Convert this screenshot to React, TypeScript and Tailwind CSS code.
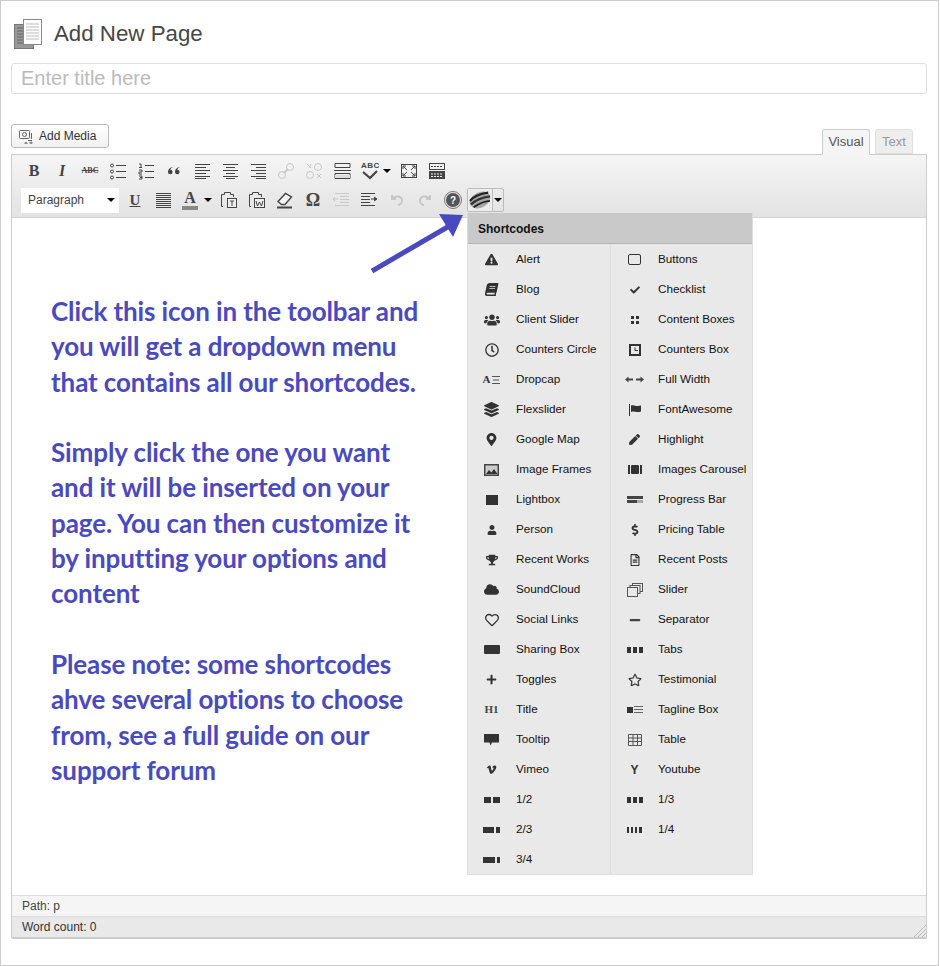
import type { ReactNode } from "react";
import {
  FaBook,
  FaCheck,
  FaCloud,
  FaDollarSign,
  FaExclamationTriangle,
  FaLayerGroup,
  FaMapMarkerAlt,
  FaMinus,
  FaPen,
  FaPlus,
  FaRegClock,
  FaRegFileAlt,
  FaRegHeart,
  FaRegStar,
  FaTrophy,
  FaUser,
  FaUsers,
  FaVimeoV,
} from "react-icons/fa";

const sans = "font-['Liberation_Sans',Arial,sans-serif]";

function Glyph({ children, muted }: { children: ReactNode; muted?: boolean }) {
  return (
    <svg
      viewBox="0 0 20 20"
      className={`w-5 h-5 ${muted ? "text-[#c8c8c8]" : "text-[#444]"}`}
      fill="none"
      stroke="currentColor"
      strokeWidth="1"
    >
      {children}
    </svg>
  );
}

function Lines({ rows }: { rows: [number, number, number][] }) {
  return (
    <>
      {rows.map(([y, a, b], i) => (
        <path key={i} d={`M${a} ${y}.5H${b}`} />
      ))}
    </>
  );
}

function Tool({ children, className = "w-7" }: { children: ReactNode; className?: string }) {
  return <div className={`h-7 flex items-center justify-center shrink-0 ${className}`}>{children}</div>;
}

function Caret() {
  return <div className="w-0 h-0 border-x-[4px] border-x-transparent border-t-[4px] border-t-black" />;
}

function PageIcon() {
  return (
    <svg viewBox="0 0 28 31" className="w-[28px] h-[31px]">
      <rect x="0.5" y="5.5" width="19" height="24" fill="#999" stroke="#777" />
      <path d="M3 9h6M3 12h6M3 15h6M3 18h6M3 21h6M3 24h6" stroke="#666" />
      <rect x="9.5" y="0.5" width="18" height="25" fill="#fff" stroke="#888" />
      <path d="M12 5h13M12 8h13M12 11h13M12 14h13M12 17h13M12 20h13" stroke="#bbb" />
    </svg>
  );
}

function MediaIcon() {
  return (
    <svg viewBox="0 0 16 16" className="w-4 h-4" fill="none" stroke="#666">
      <rect x="1.5" y="2.500" width="10" height="8" rx="1" />
      <circle cx="6.500" cy="6.500" r="2" />
      <path d="M13.500 5v6M10 12.500h4M8 14.500a1 1 0 1 0 .1 0M13 14a1 1 0 1 0 .1 0" />
    </svg>
  );
}

function ShortcodeLogo() {
  return (
    <svg viewBox="0 0 26 22" className="w-[24px] h-[20px]">
      <ellipse cx="13" cy="11" rx="12" ry="8.500" transform="rotate(-28 13 11)" fill="#a8a8a8" />
      <path d="M2 12C7 6 14 4 22 3" stroke="#222" strokeWidth="2.500" fill="none" />
      <path d="M3 16C9 10 16 8 24 7" stroke="#333" strokeWidth="2.500" fill="none" />
      <path d="M6 19C12 15 18 12 24 12" stroke="#222" strokeWidth="2" fill="none" />
    </svg>
  );
}

function Toolbar() {
  return (
    <div className="h-[63px] bg-gradient-to-b from-[#f5f5f5] to-[#e3e3e3] border-b border-[#d5d5d5] pt-[2px]">
      <div className="flex items-center h-7 pl-[8px]">
        <Tool><span className="font-['Liberation_Serif',serif] font-bold text-[16px] text-[#444]">B</span></Tool>
        <Tool><span className="font-['Liberation_Serif',serif] italic font-bold text-[16px] text-[#444]">I</span></Tool>
        <Tool><span className="font-['Liberation_Serif',serif] text-[8px] font-bold line-through text-[#444]">ABC</span></Tool>
        <Tool>
          <Glyph>
            <Lines rows={[[4, 8, 18], [10, 8, 18], [16, 8, 18]]} />
            <circle cx="4" cy="4.500" r="1.500" />
            <circle cx="4" cy="10.500" r="1.500" />
            <circle cx="4" cy="16.500" r="1.500" />
          </Glyph>
        </Tool>
        <Tool>
          <Glyph>
            <Lines rows={[[4, 9, 18], [10, 9, 18], [16, 9, 18]]} />
            <path d="M3 3h2v3M3 6.500h3M3 9h3v2H3v2h3M3 15h3v1.500H4h2V18H3" />
          </Glyph>
        </Tool>
        <Tool>
          <Glyph>
            <path
              d="M8.500 6C5.500 6.500 4 8.500 4 11a2.300 2.300 0 1 0 2.300-2.300c.2-1 1-1.700 2.200-2.100zM15.500 6c-3 .5-4.500 2.500-4.500 5a2.300 2.300 0 1 0 2.300-2.300c.2-1 1-1.700 2.200-2.100z"
              fill="#444"
              stroke="none"
            />
          </Glyph>
        </Tool>
        <Tool>
          <Glyph><Lines rows={[[3, 3, 18], [6, 3, 14], [9, 3, 18], [12, 3, 14], [15, 3, 18], [17, 3, 14]]} /></Glyph>
        </Tool>
        <Tool>
          <Glyph><Lines rows={[[3, 3, 18], [6, 6, 15], [9, 3, 18], [12, 6, 15], [15, 3, 18], [17, 6, 15]]} /></Glyph>
        </Tool>
        <Tool>
          <Glyph><Lines rows={[[3, 3, 18], [6, 8, 18], [9, 3, 18], [12, 8, 18], [15, 3, 18], [17, 8, 18]]} /></Glyph>
        </Tool>
        <Tool>
          <Glyph muted>
            <circle cx="6" cy="14" r="3.500" />
            <circle cx="14" cy="6" r="3.500" />
            <path d="M8 12l4-4" strokeWidth="2" />
          </Glyph>
        </Tool>
        <Tool>
          <Glyph muted>
            <circle cx="6" cy="14" r="3.500" />
            <circle cx="14" cy="6" r="3.500" />
            <path d="M3 3l4 4M5 7l2-4M13 13l4 4M17 13l-4 4" />
          </Glyph>
        </Tool>
        <Tool>
          <Glyph>
            <path d="M3 2.500h15v4H3zM2 9.500h17M3 12.500h15v5H3z" />
            <path d="M3 14h15v3H3z" fill="#ddd" stroke="none" />
          </Glyph>
        </Tool>
        <Tool className="w-[28px]">
          <div className="relative w-5 h-5">
            <span className={`absolute -top-[1px] left-[1px] text-[8px] font-bold tracking-[0.5px] text-[#444] ${sans}`}>ABC</span>
            <svg viewBox="0 0 20 20" className="absolute inset-0 w-5 h-5" fill="none" stroke="#444" strokeWidth="2.200">
              <path d="M3 11l7 6 7-7" />
            </svg>
          </div>
        </Tool>
        <div className="w-[10px] flex justify-start -ml-[1px]"><Caret /></div>
        <Tool className="w-[28px] ml-[2px]">
          <Glyph>
            <rect x="2.500" y="3.500" width="15" height="13" />
            <path d="M4 5l4 4M4 5h3M4 5v3M16 5l-4 4M16 5h-3M16 5v3M4 15l4-4M4 15h3M4 15v-3M16 15l-4-4M16 15h-3M16 15v-3" />
          </Glyph>
        </Tool>
        <Tool>
          <Glyph>
            <rect x="2.500" y="2.500" width="15" height="6" />
            <rect x="2.500" y="10.500" width="15" height="7" fill="#444" />
            <path d="M4 5.500h12" strokeDasharray="2 1" />
            <path d="M4 13h12M4 15.500h12" stroke="#eee" strokeDasharray="2 1" />
          </Glyph>
        </Tool>
      </div>
      <div className="flex items-center h-7 mt-[1px] pl-[9px]">
        <div className={`w-[98px] h-[25px] bg-white flex items-center justify-between pl-[7px] pr-[4px] text-[12px] text-[#444] shrink-0 ${sans}`}>
          <span>Paragraph</span>
          <Caret />
        </div>
        <Tool className="w-[32px]"><span className="font-['Liberation_Serif',serif] font-bold text-[15px] underline text-[#444]">U</span></Tool>
        <Tool className="w-[24px]">
          <Glyph><Lines rows={[[3, 3, 18], [5, 3, 18], [7, 3, 18], [9, 3, 18], [11, 3, 18], [13, 3, 18], [15, 3, 18], [17, 3, 18]]} /></Glyph>
        </Tool>
        <Tool className="w-[28px] ml-[1px]">
          <div className="flex flex-col items-center">
            <span className="font-['Liberation_Serif',serif] font-bold text-[16px] leading-[14px] text-[#444]">A</span>
            <div className="w-4 h-[4px] bg-[#888] mt-[1px]" />
          </div>
        </Tool>
        <div className="w-[10px] flex"><Caret /></div>
        <Tool className="w-[28px] ml-[1px]">
          <Glyph>
            <path d="M4 16.500H2.500v-12h3v-2h6v2h3V7" />
            <rect x="8.500" y="8.500" width="9" height="9" fill="#eee" />
            <path d="M11 11h4M13 11v5" />
          </Glyph>
        </Tool>
        <Tool>
          <Glyph>
            <path d="M4 16.500H2.500v-12h3v-2h6v2h3V7" />
            <rect x="7.500" y="8.500" width="10" height="9" fill="#eee" />
            <path d="M9 11l1.500 5 2-4 2 4 1.500-5" />
          </Glyph>
        </Tool>
        <Tool>
          <Glyph>
            <path d="M3 11.500l7.500-8 6 3.500-6.500 7.500H6.500z" fill="#f4f4f4" strokeWidth="1.400" />
            <path d="M2 17.500h15" strokeWidth="2" />
          </Glyph>
        </Tool>
        <Tool><span className="font-['Liberation_Serif',serif] font-bold text-[18px] text-[#444]">Ω</span></Tool>
        <Tool>
          <Glyph muted>
            <Lines rows={[[3, 4, 18], [6, 9, 18], [9, 9, 18], [12, 9, 18], [15, 4, 18]]} />
            <path d="M7 9H2M4 7L2 9l2 2" />
          </Glyph>
        </Tool>
        <Tool>
          <Glyph>
            <Lines rows={[[3, 2, 16], [6, 2, 11], [9, 2, 11], [12, 2, 11], [15, 2, 16]]} />
            <path d="M12 9h5M15 7l3 2-3 2" fill="#444" />
          </Glyph>
        </Tool>
        <Tool>
          <Glyph muted>
            <path d="M5 5v4h4M5 9c2-3 9-4 10 1 .5 3-2 5-4 5" strokeWidth="2" />
          </Glyph>
        </Tool>
        <Tool>
          <Glyph muted>
            <path d="M15 5v4h-4M15 9c-2-3-9-4-10 1-.5 3 2 5 4 5" strokeWidth="2" />
          </Glyph>
        </Tool>
        <Tool>
          <div className={`w-[14px] h-[14px] rounded-full bg-[#555] outline outline-1 outline-offset-1 outline-[#777] flex items-center justify-center text-white text-[10px] font-bold ${sans}`}>?</div>
        </Tool>
        <div className="h-[24px] w-[37px] flex border border-[#bbb] rounded-[2px] shrink-0">
          <div className="w-[25px] flex items-center justify-center border-r border-[#bbb] bg-[#ececec]"><ShortcodeLogo /></div>
          <div className="flex-1 flex items-center justify-center"><Caret /></div>
        </div>
      </div>
    </div>
  );
}

type Item = { label: string; icon: ReactNode };

const fa = "text-[#333] text-[13px]";
const Blocks = ({ widths }: { widths: number[] }) => (
  <div className="flex gap-[2px]">
    {widths.map((w, i) => (
      <div key={i} className="bg-[#333] h-[6px]" style={{ width: w }} />
    ))}
  </div>
);

const leftItems: Item[] = [
  { label: "Alert", icon: <FaExclamationTriangle className={fa} /> },
  { label: "Blog", icon: <FaBook className={`${fa} -skew-x-12`} /> },
  { label: "Client Slider", icon: <FaUsers className="text-[#333] text-[16px]" /> },
  { label: "Counters Circle", icon: <FaRegClock className="text-[#333] text-[14px]" /> },
  {
    label: "Dropcap",
    icon: (
      <div className="flex items-center gap-[2px] text-[#333]">
        <span className="font-['Liberation_Serif',serif] font-bold text-[11px] leading-none">A</span>
        <svg viewBox="0 0 8 8" className="w-[8px] h-[8px]" stroke="#555"><path d="M0 .5h8M1 4h6M0 7.500h8" /></svg>
      </div>
    ),
  },
  { label: "Flexslider", icon: <FaLayerGroup className="text-[#333] text-[15px]" /> },
  { label: "Google Map", icon: <FaMapMarkerAlt className={fa} /> },
  {
    label: "Image Frames",
    icon: (
      <svg viewBox="0 0 15 12" className="w-[15px] h-[12px]">
        <rect x="0" y="0" width="15" height="12" fill="#444" />
        <rect x="1.500" y="1.500" width="12" height="9" fill="#ccc" />
        <path d="M2 10l3-4 2.500 2.500L10 5l3.500 5z" fill="#333" />
      </svg>
    ),
  },
  { label: "Lightbox", icon: <div className="w-[12px] h-[10px] bg-[#333]" /> },
  { label: "Person", icon: <FaUser className="text-[#333] text-[10px]" /> },
  { label: "Recent Works", icon: <FaTrophy className="text-[#333] text-[12px]" /> },
  { label: "SoundCloud", icon: <FaCloud className="text-[#333] text-[15px]" /> },
  { label: "Social Links", icon: <FaRegHeart className="text-[#333] text-[14px]" /> },
  { label: "Sharing Box", icon: <div className="w-4 h-[9px] bg-[#333] rounded-[1px]" /> },
  { label: "Toggles", icon: <FaPlus className="text-[#333] text-[11px]" /> },
  { label: "Title", icon: <span className="font-['Liberation_Serif',serif] font-bold text-[11px] text-[#444]">H1</span> },
  {
    label: "Tooltip",
    icon: (
      <svg viewBox="0 0 15 12" className="w-[15px] h-[12px]">
        <path d="M0 0h15v8.500H8l-1.500 3-1-3H0z" fill="#333" />
      </svg>
    ),
  },
  { label: "Vimeo", icon: <FaVimeoV className="text-[#333] text-[11px]" /> },
  { label: "1/2", icon: <Blocks widths={[7, 7]} /> },
  { label: "2/3", icon: <Blocks widths={[11, 4]} /> },
  { label: "3/4", icon: <Blocks widths={[12, 3]} /> },
];

const rightItems: Item[] = [
  { label: "Buttons", icon: <div className="w-[13px] h-[11px] border-[1.5px] border-[#333] rounded-[2px]" /> },
  { label: "Checklist", icon: <FaCheck className="text-[#333] text-[10px]" /> },
  {
    label: "Content Boxes",
    icon: (
      <div className="grid grid-cols-2 gap-[2px]">
        <div className="w-[3px] h-[3px] bg-[#333]" />
        <div className="w-[3px] h-[3px] bg-[#333]" />
        <div className="w-[3px] h-[3px] bg-[#333]" />
        <div className="w-[3px] h-[3px] bg-[#333]" />
      </div>
    ),
  },
  {
    label: "Counters Box",
    icon: (
      <svg viewBox="0 0 12 12" className="w-3 h-3" fill="none" stroke="#333">
        <rect x="1" y="1" width="10" height="10" strokeWidth="2" />
        <path d="M6 3.500V6.500H9" />
      </svg>
    ),
  },
  {
    label: "Full Width",
    icon: (
      <svg viewBox="0 0 19 7" className="w-[19px] h-[7px]" fill="#444">
        <path d="M0 3.500L3.500 0.500v2H8v2H3.500v2zM19 3.500L15.500 0.500v2H11v2h4.500v2z" />
      </svg>
    ),
  },
  {
    label: "FontAwesome",
    icon: (
      <svg viewBox="0 0 14 12" className="w-[14px] h-[12px]" fill="#333">
        <path d="M1 0h1v12H1zM3 1.500c3-1 4 .5 6 .5 2 0 3-.5 4-.5v6c-1 .5-2 .5-4 .5s-3-1-6 0z" />
      </svg>
    ),
  },
  { label: "Highlight", icon: <FaPen className="text-[#333] text-[11px]" /> },
  {
    label: "Images Carousel",
    icon: (
      <div className="flex items-center gap-[1px]">
        <div className="w-[2px] h-[9px] bg-[#333]" />
        <div className="w-[8px] h-[9px] bg-[#333] rounded-[1px]" />
        <div className="w-[2px] h-[9px] bg-[#333]" />
      </div>
    ),
  },
  {
    label: "Progress Bar",
    icon: (
      <div className="flex flex-col gap-[1px]">
        <div className="w-4 h-[3px] bg-[#444]" />
        <div className="w-4 h-[3px] bg-gradient-to-r from-[#444] from-60% to-[#aaa] to-60%" />
      </div>
    ),
  },
  { label: "Pricing Table", icon: <FaDollarSign className="text-[#333] text-[12px]" /> },
  { label: "Recent Posts", icon: <FaRegFileAlt className="text-[#333] text-[12px]" /> },
  {
    label: "Slider",
    icon: (
      <svg viewBox="0 0 16 14" className="w-4 h-[14px]" fill="#e9e9e9" stroke="#555">
        <rect x="5.500" y="0.500" width="10" height="8" />
        <rect x="3" y="2.500" width="10" height="8" />
        <rect x="0.500" y="4.500" width="10" height="9" />
      </svg>
    ),
  },
  { label: "Separator", icon: <FaMinus className="text-[#444] text-[12px]" /> },
  { label: "Tabs", icon: <Blocks widths={[4, 4, 4]} /> },
  { label: "Testimonial", icon: <FaRegStar className="text-[#333] text-[14px]" /> },
  {
    label: "Tagline Box",
    icon: (
      <div className="flex items-center gap-[1px]">
        <div className="w-[6px] h-[6px] bg-[#333]" />
        <svg viewBox="0 0 9 7" className="w-[9px] h-[7px]" stroke="#666"><path d="M0 .5h9M0 3.500h9M0 6.500h9" /></svg>
      </div>
    ),
  },
  {
    label: "Table",
    icon: (
      <svg viewBox="0 0 14 12" className="w-[14px] h-[12px]" fill="none" stroke="#555">
        <path d="M.5.500h13v11H.5zM.5 4h13M.5 7.500h13M5 .5v11M9.500.5v11" />
      </svg>
    ),
  },
  { label: "Youtube", icon: <span className={`text-[12px] font-bold text-[#333] ${sans}`}>Y</span> },
  { label: "1/3", icon: <Blocks widths={[4, 4, 4]} /> },
  { label: "1/4", icon: <Blocks widths={[2, 2, 2, 3]} /> },
];

function MenuColumn({ items, className, iconBox }: { items: Item[]; className: string; iconBox: string }) {
  return (
    <div className={`py-[1px] ${className}`}>
      {items.map((item) => (
        <div key={item.label} className="h-[30px] flex items-center">
          <div className={`flex justify-center pb-[1px] ${iconBox}`}>{item.icon}</div>
          <span className="text-[11.7px] text-[#111] whitespace-nowrap pb-[2px]">{item.label}</span>
        </div>
      ))}
    </div>
  );
}

function ShortcodeMenu() {
  return (
    <div className={`absolute left-[455px] top-[-5px] w-[286px] h-[662px] bg-[#e9e9e9] border-x border-b border-[#dcdcdc] ${sans}`}>
      <div className="h-[31px] bg-[#c9c9c9] border-b border-[#b5b5b5] flex items-center pl-[10px] pt-[1px] text-[12px] font-bold text-[#111]">
        Shortcodes
      </div>
      <div className="flex h-[630px]">
        <MenuColumn items={leftItems} className="w-[143px] border-r border-[#dedede]" iconBox="w-[48px] pr-[1px]" />
        <MenuColumn items={rightItems} className="flex-1" iconBox="w-[47px]" />
      </div>
    </div>
  );
}

function Arrow() {
  return (
    <svg viewBox="0 0 100 66" className="absolute left-[359px] top-[-6px] w-[100px] h-[66px]">
      <path d="M1 59L80 13" stroke="#4a4ac0" strokeWidth="5" fill="none" />
      <path d="M68 2L92 3L82 25Z" fill="#4a4ac0" />
    </svg>
  );
}

const paragraphs = [
  ["Click this icon in the toolbar and", "you will get a dropdown menu", "that contains all our shortcodes."],
  ["Simply click the one you want", "and it will be inserted on your", "page. You can then customize it", "by inputting your options and", "content"],
  ["Please note: some shortcodes", "ahve several options to choose", "from, see a full guide on our", "support forum"],
];

export default function App() {
  return (
    <div className={`w-[940px] h-[966px] bg-white ${sans}`}>
      <div className="w-[939px] h-[966px] border border-[#ccc] pl-[10px] pr-[11px] overflow-hidden">
        <div className="flex items-center h-[62px] pl-[3px] pt-[4px] gap-[12px]">
          <PageIcon />
          <h1 className="text-[22.3px] text-[#464646] font-normal leading-none">Add New Page</h1>
        </div>
        <div className="h-[31px] border border-[#dfdfdf] rounded-[3px] flex items-center pl-[9px] pb-[2px] text-[20px] text-[#bbb]">
          Enter title here
        </div>
        <div className="flex items-end justify-between mt-[30px] h-[30px] pr-[14px]">
          <div className="w-[98px] h-[24px] mb-[6px] border border-[#bbb] rounded-[3px] bg-gradient-to-b from-white to-[#f1f1f1] flex items-center pl-[6px] gap-[5px] text-[12px] text-[#333]">
            <MediaIcon />
            Add Media
          </div>
          <div className="flex gap-[5px] -mb-[1px] relative z-10">
            <div className="w-[48px] h-[26px] border border-[#ccc] border-b-[#f5f5f5] rounded-t-[3px] bg-[#f5f5f5] flex items-center justify-center text-[13px] text-[#555]">
              Visual
            </div>
            <div className="w-[38px] h-[25px] mb-[1px] border border-[#dfdfdf] rounded-t-[3px] bg-[#eee] flex items-center justify-center text-[13px] text-[#999]">
              Text
            </div>
          </div>
        </div>
        <div className="w-[916px] h-[785px] border border-[#ccc] border-b-2 rounded-b-[2px] flex flex-col">
          <Toolbar />
          <div className="relative flex-1 bg-white">
            <ShortcodeMenu />
            <Arrow />
            <div className="pl-[39px] pt-[76px] font-['Lato',sans-serif] font-bold text-[26px] leading-[35.3px] text-[#4a4ac0] tracking-[-0.1px]">
              {paragraphs.map((lines) => (
                <p key={lines[0]} className="mb-[35.3px] whitespace-nowrap">
                  {lines.map((line) => (
                    <span key={line} className="block">{line}</span>
                  ))}
                </p>
              ))}
            </div>
          </div>
          <div className="h-[21px] bg-[#f5f5f5] border-t border-[#ddd] flex items-center pl-[10px] text-[12px] text-[#444]">Path: p</div>
          <div className="h-[21px] bg-[#e9e9e9] border-t border-[#ddd] flex items-center justify-between pl-[10px] text-[12px] text-[#333]">
            <span>Word count: 0</span>
            <svg viewBox="0 0 12 12" className="w-3 h-3 mt-auto" stroke="#bbb">
              <path d="M0 12L12 0M4 12L12 4M8 12L12 8" />
            </svg>
          </div>
        </div>
      </div>
    </div>
  );
}
